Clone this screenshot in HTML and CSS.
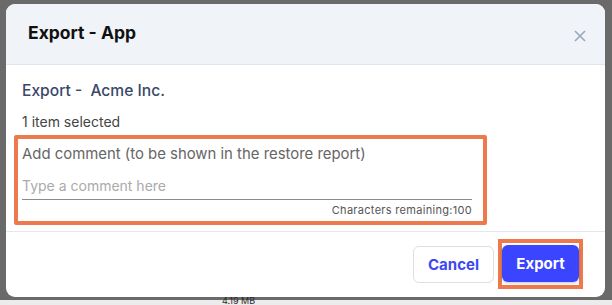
FILE: index.html
```html
<!DOCTYPE html>
<html lang="en">

<head>
    <meta charset="UTF-8">
    <meta name="viewport" content="width=device-width, initial-scale=1.0">
    <title>Export - App</title>
    <link rel="stylesheet" href="styles.css">
</head>

<body>
    <div class="backdrop">
        <div class="modal">
            <div class="modal-header">
                <h2>Export - App</h2>
                <svg class="close" width="12" height="12" viewBox="0 0 12 12">
                    <path d="M1 1 L11 11 M11 1 L1 11" stroke="#9ba6b9" stroke-width="1.6" fill="none" />
                </svg>
            </div>

            <div class="modal-body">
                <h3>Export -&nbsp; Acme Inc.</h3>
                <p class="selected">1 item selected</p>

                <div class="comment-box">
                    <label>Add comment (to be shown in the restore report)</label>
                    <div class="comment-input">Type a comment here</div>
                    <div class="counter">Characters remaining:100</div>
                </div>
            </div>

            <div class="modal-footer">
                <button class="btn btn-cancel">Cancel</button>
                <div class="highlight">
                    <button class="btn btn-export">Export</button>
                </div>
            </div>
        </div>
        <div class="behind">4.19 MB</div>
    </div>
</body>

</html>
```

FILE: styles.css
```css
* {
    margin: 0;
    padding: 0;
    box-sizing: border-box;
}

body {
    font-family: 'Inter', sans-serif;
    background: #ececec;
    width: 612px;
    height: 305px;
    overflow: hidden;
}

.backdrop {
    background: #6a6a6a;
    height: 300px;
    padding: 4px 0 0 6px;
    position: relative;
}

.modal {
    width: 599px;
    height: 293px;
    background: #fff;
    border-radius: 9px;
    overflow: hidden;
    display: flex;
    flex-direction: column;
}

/* Header */
.modal-header {
    height: 61px;
    background: #f0f4f9;
    border-bottom: 1px solid #dde5ef;
    display: flex;
    align-items: center;
    justify-content: space-between;
    padding: 0 19px 0 22px;
}

.modal-header h2 {
    font-size: 17.5px;
    font-weight: 700;
    color: #111;
    margin-top: -3px;
}

.close {
    margin-top: 3px;
}

/* Body */
.modal-body {
    padding: 16px 0 0 8px;
    flex-grow: 1;
}

.modal-body h3 {
    font-size: 15.6px;
    font-weight: 500;
    color: #3b4869;
    padding-left: 8px;
    line-height: 20px;
}

.selected {
    font-size: 14px;
    color: #444;
    padding-left: 8px;
    margin-top: 12px;
    line-height: 18px;
}

.comment-box {
    width: 473px;
    height: 90px;
    margin-top: 4px;
    border: 4px solid #ec7a4d;
    border-radius: 2px;
    padding: 6px 11px 0 4px;
}

.comment-box label {
    display: block;
    font-size: 14.9px;
    color: #666;
    line-height: 18px;
}

.comment-input {
    font-size: 14px;
    color: #aaa;
    margin-top: 14px;
    line-height: 18px;
    padding-bottom: 4px;
    border-bottom: 1px solid #8a8a8a;
}

.counter {
    font-size: 11px;
    color: #555;
    text-align: right;
    margin-top: 3px;
    letter-spacing: 0.3px;
}

/* Footer */
.modal-footer {
    height: 66px;
    border-top: 1px solid #e3e8ef;
    display: flex;
    justify-content: flex-end;
    align-items: flex-start;
    gap: 4px;
    padding: 7px 22px 0 0;
}

.btn {
    font-family: 'Inter', sans-serif;
    font-size: 15px;
    font-weight: 700;
    border-radius: 6px;
    height: 37px;
}

.btn-cancel {
    width: 81px;
    background: #fff;
    border: 1px solid #dcdfe4;
    color: #3d48f2;
    margin-top: 7px;
}

.highlight {
    border: 4px solid #ec7a4d;
    padding: 2px 0 0 0;
    width: 85px;
    height: 50px;
    display: flex;
    justify-content: center;
}

.btn-export {
    width: 77px;
    background: #3b44ff;
    border: none;
    color: #fff;
    box-shadow: 0 1px 3px rgba(0, 0, 0, 0.25);
}

.behind {
    position: absolute;
    left: 222px;
    top: 296px;
    font-size: 9px;
    line-height: 9px;
    color: #2a2a2a;
}
```
